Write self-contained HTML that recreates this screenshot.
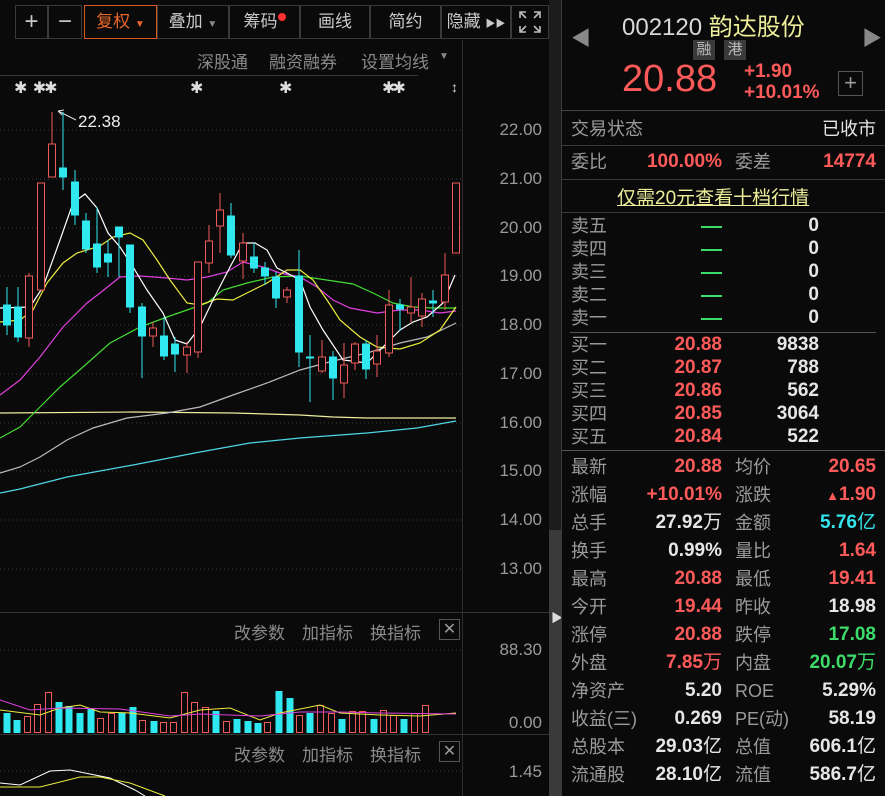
<!DOCTYPE html>
<html><head><meta charset="utf-8">
<style>
*{margin:0;padding:0;box-sizing:border-box}
body{width:885px;height:796px;background:#0a0a0a;overflow:hidden;position:relative;font-family:"Liberation Sans","Noto Sans CJK SC",sans-serif;color:#bdbdbd}
.a{position:absolute;white-space:nowrap}
.tb{position:absolute;top:5px;height:34px;border:1px solid #3a3a3a;color:#c8c8c8;font-size:17px;line-height:32px;text-align:center}
.lbl,.lb2,.v1,.v2{position:absolute;line-height:22px;height:22px;white-space:nowrap}
.lbl{left:571px;font-size:18px;color:#9a9a9a}
.lb2{left:735px;font-size:18px;color:#9a9a9a}
.v1{right:163px;font-size:19px;font-weight:bold;text-align:right}
.v2{right:9px;font-size:19px;font-weight:bold;text-align:right}
.r{color:#ff5a5a}.w{color:#e6e6e6}.g{color:#3ddc6a}.c{color:#33e6ee}
.ax{position:absolute;left:470px;width:72px;text-align:right;font-size:17px;color:#9a9a9a}
.hl{position:absolute;height:1px;background:#3a3a3a}
.ind{position:absolute;font-size:17px;color:#8a8a8a;white-space:nowrap}
</style></head><body>

<!-- toolbar -->
<div class="tb" style="left:15px;width:33px;font-size:24px">+</div>
<div class="tb" style="left:48px;width:34px;font-size:24px">−</div>
<div class="tb" style="left:84px;width:73px;border-color:#d9581c;color:#e8662a">复权 <span style="font-size:10px">▼</span></div>
<div class="tb" style="left:157px;width:72px">叠加 <span style="font-size:10px;color:#888">▼</span></div>
<div class="tb" style="left:229px;width:71px">筹码<span style="display:inline-block;width:8px;height:8px;border-radius:4px;background:#ff3030;vertical-align:top;margin-top:7px"></span></div>
<div class="tb" style="left:300px;width:70px">画线</div>
<div class="tb" style="left:370px;width:71px">简约</div>
<div class="tb" style="left:441px;width:70px">隐藏 <span style="font-size:10px">▶▶</span></div>
<div class="tb" style="left:511px;width:38px">
<svg width="24" height="24" viewBox="0 0 24 24" style="margin-top:4px" fill="none" stroke="#bbb" stroke-width="1.6"><path d="M2 8V2h6M2 2l6 6M16 2h6v6M22 2l-6 6M2 16v6h6M2 22l6-6M22 16v6h-6M22 22l-6-6"/></svg></div>

<div class="hl" style="left:0;top:75px;width:418px"></div>
<div class="ind" style="left:197px;top:48px">深股通</div>
<div class="ind" style="left:269px;top:48px">融资融券</div>
<div class="ind" style="left:361px;top:48px">设置均线</div>
<div class="ind" style="left:439px;top:51px;font-size:10px">▼</div>

<!-- axes separators -->
<div style="position:absolute;left:462px;top:40px;width:1px;height:756px;background:#2e2e2e"></div>
<div style="position:absolute;left:549px;top:0;width:12px;height:796px;background:#1c1c1c"></div>
<div style="position:absolute;left:549px;top:530px;width:12px;height:266px;background:#3a3a3a"></div>
<div class="a" style="left:551px;top:609px;font-size:12px;color:#ddd">▶</div>
<div style="position:absolute;left:561px;top:0;width:1px;height:796px;background:#3a3a3a"></div>
<div class="hl" style="left:0;top:612px;width:549px;background:#333"></div>
<div class="hl" style="left:0;top:734px;width:549px;background:#333"></div>

<!-- axis labels -->
<div class="ax" style="top:120px">22.00</div>
<div class="ax" style="top:169px">21.00</div>
<div class="ax" style="top:218px">20.00</div>
<div class="ax" style="top:266px">19.00</div>
<div class="ax" style="top:315px">18.00</div>
<div class="ax" style="top:364px">17.00</div>
<div class="ax" style="top:413px">16.00</div>
<div class="ax" style="top:461px">15.00</div>
<div class="ax" style="top:510px">14.00</div>
<div class="ax" style="top:559px">13.00</div>
<div class="ax" style="top:640px">88.30</div>
<div class="ax" style="top:713px">0.00</div>
<div class="ax" style="top:762px">1.45</div>

<div class="ind" style="left:234px;top:619px">改参数</div><div class="ind" style="left:302px;top:619px">加指标</div><div class="ind" style="left:345px;top:619px;left:370px">换指标</div>
<div class="a" style="left:439px;top:619px;width:21px;height:21px;border:1px solid #555;color:#999;font-size:16px;line-height:19px;text-align:center">✕</div>
<div class="ind" style="left:234px;top:741px">改参数</div><div class="ind" style="left:302px;top:741px">加指标</div><div class="ind" style="left:370px;top:741px">换指标</div>
<div class="a" style="left:439px;top:741px;width:21px;height:21px;border:1px solid #555;color:#999;font-size:16px;line-height:19px;text-align:center">✕</div>

<div class="a" style="left:14px;top:78px;font-size:16px;color:#ddd;letter-spacing:-2px">✱&nbsp;&nbsp;&nbsp;✱✱</div>
<div class="a" style="left:190px;top:78px;font-size:16px;color:#ddd">✱</div>
<div class="a" style="left:279px;top:78px;font-size:16px;color:#ddd">✱</div>
<div class="a" style="left:382px;top:78px;font-size:16px;color:#ddd;letter-spacing:-3px">✱✱</div>
<div class="a" style="left:451px;top:79px;font-size:14px;color:#ddd;font-weight:bold">↕</div>
<div class="a" style="left:78px;top:112px;font-size:17px;color:#eee">22.38</div>

<svg class="a" style="left:0;top:0" width="462" height="796">
<g stroke="#3a3a3a" stroke-dasharray="1 3" stroke-width="1">
<path d="M0 130H462M0 179H462M0 228H462M0 276H462M0 325H462M0 374H462M0 423H462M0 471H462M0 520H462M0 569H462M0 650H462M0 771H462"/>
</g>
<path d="M58 111L76 120M58 111l4 4M58 111l6-1" stroke="#ddd" fill="none"/>
<g fill="none" stroke-width="1.2">
<polyline stroke="#4fd6e6" points="0,493 20,489 67,477 133,465 200,452 250,443 300,438 367,433 417,428 456,421"/>
<polyline stroke="#eeeea0" points="0,413 133,412 233,413 300,415 333,417 367,418 456,418"/>
<polyline stroke="#bbbbbb" points="0,473 20,467 40,457 67,440 93,428 127,418 167,413 200,407 233,395 267,383 300,370 333,361 367,353 400,343 427,337 456,323"/>
<polyline stroke="#44dd33" points="0,438 20,427 40,407 60,387 83,367 110,343 140,327 167,317 187,310 207,303 223,290 247,283 273,277 300,276 320,279 353,284 373,293 393,303 413,307 433,308 456,308"/>
<polyline stroke="#e040e0" points="0,395 20,380 40,357 63,327 87,303 100,293 120,277 140,276 167,278 187,280 207,277 227,272 243,262 263,267 280,273 300,277 317,287 333,300 350,308 377,313 400,310 420,310 440,313 456,311"/>
<polyline stroke="#ecec40" points="0,322 20,320 33,310 47,283 63,263 77,253 100,246 113,237 130,233 143,240 157,260 170,280 187,303 200,305 217,299 233,300 247,293 267,283 287,270 300,270 313,280 327,300 340,320 360,337 377,347 400,349 420,343 440,330 456,307"/>
<polyline stroke="#ffffff" points="0,308 30,307 43,287 60,240 73,203 85,194 97,208 108,233 120,247 133,267 147,290 163,313 175,340 187,344 200,327 213,300 230,267 243,243 255,243 267,250 277,268 287,273 300,280 310,307 323,330 343,360 367,363 380,350 390,340 400,330 413,322 427,317 443,303 455,275"/>
</g>
<g stroke="#2fe8f0" fill="#2fe8f0">
<path d="M7 287V335M18 287V342M63 112V190M75 170V225M86 213V253M97 207V273M108 240V277M119 227V277M130 245V313M142 303V378M164 317V360M175 337V372M231 203V258M254 243V273M265 262V285M276 272V308M299 250V367M310 335V402M333 351V400M366 340V379M400 299V331M433 290V317" fill="none"/>
<rect x="3.5" y="305" width="7" height="20"/><rect x="14.5" y="307" width="7" height="30"/><rect x="59.5" y="168" width="7" height="9"/><rect x="71.5" y="182" width="7" height="33"/><rect x="82.5" y="221" width="7" height="28"/><rect x="93.5" y="244" width="7" height="23"/><rect x="104.5" y="254" width="7" height="8"/><rect x="115.5" y="227" width="7" height="10"/><rect x="126.5" y="245" width="7" height="62"/><rect x="138.5" y="307" width="7" height="29"/><rect x="160.5" y="336" width="7" height="20"/><rect x="171.5" y="344" width="7" height="10"/><rect x="227.5" y="216" width="7" height="39"/><rect x="250.5" y="257" width="7" height="11"/><rect x="261.5" y="268" width="7" height="8"/><rect x="272.5" y="277" width="7" height="21"/><rect x="295.5" y="276" width="7" height="76"/><rect x="306.5" y="357" width="7" height="1"/><rect x="329.5" y="357" width="7" height="21"/><rect x="362.5" y="344" width="7" height="25"/><rect x="396.5" y="305" width="7" height="4"/><rect x="429.5" y="301" width="7" height="2"/>
</g>
<g stroke="#f05a5a" fill="#0a0a0a">
<path d="M29 273V276M29 338V347M52 112V144M153 322V328M153 336V347M187 342V347M187 355V373M198 352V358M209 225V241M209 263V273M220 193V210M220 226V253M243 233V243M243 261V279M287 287V290M287 297V303M322 340V357M322 371V373M344 343V365M344 383V398M355 342V344M355 363V370M377 335V351M377 364V377M389 290V305M389 353V357M411 277V307M411 313V322M422 293V299M422 316V327M445 253V275M445 302V310" fill="none"/>
<rect x="25.5" y="276" width="7" height="62"/><rect x="37.5" y="183" width="7" height="107"/><rect x="48.5" y="144" width="7" height="33"/><rect x="149.5" y="328" width="7" height="8"/><rect x="183.5" y="347" width="7" height="8"/><rect x="194.5" y="262" width="7" height="90"/><rect x="205.5" y="241" width="7" height="22"/><rect x="216.5" y="210" width="7" height="16"/><rect x="239.5" y="243" width="7" height="18"/><rect x="283.5" y="290" width="7" height="7"/><rect x="318.5" y="357" width="7" height="14"/><rect x="340.5" y="365" width="7" height="18"/><rect x="351.5" y="344" width="7" height="19"/><rect x="373.5" y="351" width="7" height="13"/><rect x="385.5" y="305" width="7" height="48"/><rect x="407.5" y="307" width="7" height="6"/><rect x="418.5" y="299" width="7" height="17"/><rect x="441.5" y="275" width="7" height="27"/><rect x="452.5" y="183" width="7" height="70"/>
</g>
<g fill="#2fe8f0">
<rect x="3.5" y="713" width="7" height="20"/><rect x="13.5" y="720" width="7" height="13"/><rect x="55.5" y="702" width="7" height="31"/><rect x="65.5" y="706" width="7" height="27"/><rect x="76.5" y="713" width="7" height="20"/><rect x="87.5" y="709" width="7" height="24"/><rect x="118.5" y="713" width="7" height="20"/><rect x="129.5" y="707" width="7" height="26"/><rect x="150.5" y="721" width="7" height="12"/><rect x="212.5" y="711" width="7" height="22"/><rect x="233.5" y="719" width="7" height="14"/><rect x="244.5" y="721" width="7" height="12"/><rect x="254.5" y="723" width="7" height="10"/><rect x="275.5" y="691" width="7" height="42"/><rect x="286.5" y="698" width="7" height="35"/><rect x="306.5" y="713" width="7" height="20"/><rect x="338.5" y="719" width="7" height="14"/><rect x="370.5" y="719" width="7" height="14"/><rect x="400.5" y="719" width="7" height="14"/>
</g>
<g fill="none" stroke="#f05a5a">
<rect x="24.5" y="716.5" width="6" height="16"/><rect x="34.5" y="704.5" width="6" height="28"/><rect x="45.5" y="692.5" width="6" height="40"/><rect x="97.5" y="718.5" width="6" height="14"/><rect x="108.5" y="713.5" width="6" height="19"/><rect x="139.5" y="720.5" width="6" height="12"/><rect x="160.5" y="722.5" width="6" height="10"/><rect x="170.5" y="722.5" width="6" height="10"/><rect x="181.5" y="692.5" width="6" height="40"/><rect x="191.5" y="702.5" width="6" height="30"/><rect x="202.5" y="707.5" width="6" height="25"/><rect x="223.5" y="721.5" width="6" height="11"/><rect x="264.5" y="722.5" width="6" height="10"/><rect x="296.5" y="715.5" width="6" height="17"/><rect x="317.5" y="705.5" width="6" height="27"/><rect x="328.5" y="713.5" width="6" height="19"/><rect x="349.5" y="711.5" width="6" height="21"/><rect x="359.5" y="711.5" width="6" height="21"/><rect x="380.5" y="710.5" width="6" height="22"/><rect x="390.5" y="715.5" width="6" height="17"/><rect x="411.5" y="713.5" width="6" height="19"/><rect x="422.5" y="705.5" width="6" height="27"/>
</g>
<polyline fill="none" stroke="#ecec40" points="0,710 40,715 60,708 80,705 100,712 130,713 170,718 200,710 230,708 260,720 280,713 320,705 340,713 380,715 420,716 456,713"/>
<polyline fill="none" stroke="#e040e0" points="0,700 30,710 60,708 120,709 170,716 200,714 260,716 300,712 340,712 380,713 456,714"/>
<polyline fill="none" stroke="#fff" points="0,783 20,785 50,771 70,770 110,778 135,790 145,796"/>
<polyline fill="none" stroke="#ecec40" points="0,787 40,787 80,777 100,777 130,783 165,796"/>
</svg>

<!-- right panel -->
<div class="a" style="left:571px;top:22px;font-size:20px;color:#888">◀</div>
<div class="a" style="left:862px;top:22px;font-size:20px;color:#888">▶</div>
<div class="a" style="left:622px;top:7px;font-size:24px;color:#d8d8d8">002120 <span style="color:#eded9a">韵达股份</span></div>
<div class="a" style="left:693px;top:40px;width:22px;height:20px;background:#3a3a3a;color:#bbb;font-size:15px;text-align:center;line-height:20px">融</div>
<div class="a" style="left:724px;top:40px;width:22px;height:20px;background:#3a3a3a;color:#bbb;font-size:15px;text-align:center;line-height:20px">港</div>
<div class="a" style="left:622px;top:58px;font-size:38px;color:#ff5a5a">20.88</div>
<div class="a" style="left:744px;top:61px;font-size:19px;font-weight:bold;color:#ff5a5a;line-height:21px">+1.90<br>+10.01%</div>
<div class="a" style="left:838px;top:71px;width:25px;height:25px;border:1px solid #555;color:#999;font-size:22px;text-align:center;line-height:22px">+</div>

<div class="hl" style="left:562px;top:110px;width:323px;background:#444"></div>
<div class="lbl" style="top:118px">交易状态</div><div class="v2 w" style="top:118px;font-weight:normal;font-size:18px">已收市</div>
<div class="hl" style="left:562px;top:145px;width:323px"></div>
<div class="lbl" style="top:151px">委比</div><div class="v1 r" style="top:151px">100.00%</div>
<div class="lb2" style="top:151px">委差</div><div class="v2 r" style="top:151px">14774</div>
<div class="hl" style="left:562px;top:179px;width:323px"></div>
<div class="a" style="left:617px;top:183px;font-size:19px;color:#eded9a;text-decoration:underline">仅需20元查看十档行情</div>
<div class="hl" style="left:562px;top:212px;width:323px"></div>

<div class="lbl" style="top:215px">卖五</div><div class="lbl" style="top:238px">卖四</div><div class="lbl" style="top:261px">卖三</div><div class="lbl" style="top:284px">卖二</div><div class="lbl" style="top:307px">卖一</div>
<div class="a" style="left:701px;top:226px;width:21px;height:2px;background:#3ddc6a"></div>
<div class="a" style="left:701px;top:249px;width:21px;height:2px;background:#3ddc6a"></div>
<div class="a" style="left:701px;top:272px;width:21px;height:2px;background:#3ddc6a"></div>
<div class="a" style="left:701px;top:295px;width:21px;height:2px;background:#3ddc6a"></div>
<div class="a" style="left:701px;top:318px;width:21px;height:2px;background:#3ddc6a"></div>
<div class="v2 w" style="right:66px;top:215px">0</div><div class="v2 w" style="right:66px;top:238px">0</div><div class="v2 w" style="right:66px;top:261px">0</div><div class="v2 w" style="right:66px;top:284px">0</div><div class="v2 w" style="right:66px;top:307px">0</div>
<div class="hl" style="left:570px;top:332px;width:306px;background:#555"></div>
<div class="lbl" style="top:334px">买一</div><div class="lbl" style="top:357px">买二</div><div class="lbl" style="top:380px">买三</div><div class="lbl" style="top:403px">买四</div><div class="lbl" style="top:426px">买五</div>
<div class="v1 r" style="top:334px">20.88</div><div class="v1 r" style="top:357px">20.87</div><div class="v1 r" style="top:380px">20.86</div><div class="v1 r" style="top:403px">20.85</div><div class="v1 r" style="top:426px">20.84</div>
<div class="v2 w" style="right:66px;top:334px">9838</div><div class="v2 w" style="right:66px;top:357px">788</div><div class="v2 w" style="right:66px;top:380px">562</div><div class="v2 w" style="right:66px;top:403px">3064</div><div class="v2 w" style="right:66px;top:426px">522</div>
<div class="hl" style="left:562px;top:450px;width:323px;background:#555"></div>

<div class="lbl" style="top:456px">最新</div><div class="v1 r" style="top:456px">20.88</div><div class="lb2" style="top:456px">均价</div><div class="v2 r" style="top:456px">20.65</div>
<div class="lbl" style="top:484px">涨幅</div><div class="v1 r" style="top:484px">+10.01%</div><div class="lb2" style="top:484px">涨跌</div><div class="v2 r" style="top:484px"><span style="font-size:13px">▲</span>1.90</div>
<div class="lbl" style="top:512px">总手</div><div class="v1 w" style="top:512px">27.92<span style="font-weight:normal">万</span></div><div class="lb2" style="top:512px">金额</div><div class="v2 c" style="top:512px">5.76<span style="font-weight:normal">亿</span></div>
<div class="lbl" style="top:540px">换手</div><div class="v1 w" style="top:540px">0.99%</div><div class="lb2" style="top:540px">量比</div><div class="v2 r" style="top:540px">1.64</div>
<div class="lbl" style="top:568px">最高</div><div class="v1 r" style="top:568px">20.88</div><div class="lb2" style="top:568px">最低</div><div class="v2 r" style="top:568px">19.41</div>
<div class="lbl" style="top:596px">今开</div><div class="v1 r" style="top:596px">19.44</div><div class="lb2" style="top:596px">昨收</div><div class="v2 w" style="top:596px">18.98</div>
<div class="lbl" style="top:624px">涨停</div><div class="v1 r" style="top:624px">20.88</div><div class="lb2" style="top:624px">跌停</div><div class="v2 g" style="top:624px">17.08</div>
<div class="lbl" style="top:652px">外盘</div><div class="v1 r" style="top:652px">7.85<span style="font-weight:normal">万</span></div><div class="lb2" style="top:652px">内盘</div><div class="v2 g" style="top:652px">20.07<span style="font-weight:normal">万</span></div>
<div class="lbl" style="top:680px">净资产</div><div class="v1 w" style="top:680px">5.20</div><div class="lb2" style="top:680px">ROE</div><div class="v2 w" style="top:680px">5.29%</div>
<div class="lbl" style="top:708px">收益(三)</div><div class="v1 w" style="top:708px">0.269</div><div class="lb2" style="top:708px">PE(动)</div><div class="v2 w" style="top:708px">58.19</div>
<div class="lbl" style="top:736px">总股本</div><div class="v1 w" style="top:736px">29.03<span style="font-weight:normal">亿</span></div><div class="lb2" style="top:736px">总值</div><div class="v2 w" style="top:736px">606.1<span style="font-weight:normal">亿</span></div>
<div class="lbl" style="top:764px">流通股</div><div class="v1 w" style="top:764px">28.10<span style="font-weight:normal">亿</span></div><div class="lb2" style="top:764px">流值</div><div class="v2 w" style="top:764px">586.7<span style="font-weight:normal">亿</span></div>
</body></html>
